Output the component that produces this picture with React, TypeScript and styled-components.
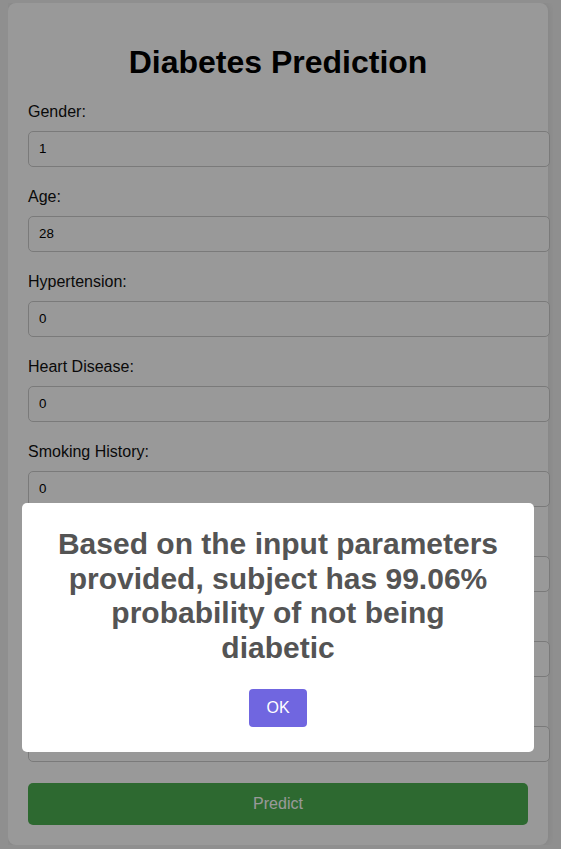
import styled, {createGlobalStyle} from "styled-components"

const fields = [
    {label: "Gender", value: "1"},
    {label: "Age", value: "28"},
    {label: "Hypertension", value: "0"},
    {label: "Heart Disease", value: "0"},
    {label: "Smoking History", value: "0"},
    {label: "BMI", value: "25.3"},
    {label: "HbA1c Level", value: "5.6"},
    {label: "Blood Glucose Level", value: "100"},
];

export default function App() {
    return (
        <>
            <GlobalStyle/>
            <Container>
                <Title>Diabetes Prediction</Title>
                <Form onSubmit={(e) => e.preventDefault()}>
                    {fields.map((field) => (
                        <Field key={field.label}>
                            <Label>{field.label}:</Label>
                            <Input type="text" defaultValue={field.value}/>
                        </Field>
                    ))}
                    <PredictButton type="submit">Predict</PredictButton>
                </Form>
            </Container>
            <Overlay>
                <Popup>
                    <PopupTitle>
                        Based on the input parameters provided, subject has 99.06% probability of not being diabetic
                    </PopupTitle>
                    <Actions>
                        <ConfirmButton>OK</ConfirmButton>
                    </Actions>
                </Popup>
            </Overlay>
        </>
    )
}

const GlobalStyle = createGlobalStyle`
    html, body {
        background: #efefef;
    }

    body {
        margin: 3px 8px 5px;
        font-family: "Liberation Sans", Arial, sans-serif;
        color: #000;
    }
`

const Container = styled.div`
    width: 500px;
    padding: 20px;

    background: #fff;
    border-radius: 8px;
    box-shadow: 0 0 10px rgba(0, 0, 0, 0.1);
`

const Title = styled.h1`
    margin: 21px 0;

    font-size: 32px;
    font-weight: bold;
    text-align: center;
`

const Form = styled.form`
    display: flex;
    flex-direction: column;
`

const Field = styled.div`
    display: flex;
    flex-direction: column;
    margin-bottom: 20px;
`

const Label = styled.label`
    margin-top: 1px;
    margin-bottom: 10px;

    font-size: 16px;
    line-height: 18px;
    color: #111;
`

const Input = styled.input`
    box-sizing: content-box;
    width: 100%;
    padding: 10px;
    margin: 0;

    font-family: "Liberation Sans", Arial, sans-serif;
    font-size: 13.33px;
    line-height: 14px;
    color: #000;

    border: 1px solid #ccc;
    border-radius: 5px;
    background: #fff;
    outline: none;
`

const PredictButton = styled.button`
    margin-top: 1px;
    padding: 12px;
    width: 100%;

    font-family: "Liberation Sans", Arial, sans-serif;
    font-size: 16px;
    line-height: 18px;
    color: #fff;

    border: none;
    border-radius: 5px;
    background: #4caf50;
    cursor: pointer;
`

const Overlay = styled.div`
    position: fixed;
    inset: 0;

    display: flex;
    justify-content: flex-start;
    align-items: flex-start;
    padding: 503px 0 0 22px;

    background: rgba(0, 0, 0, 0.4);
`

const Popup = styled.div`
    width: 512px;
    padding: 0 0 20px;

    display: flex;
    flex-direction: column;
    align-items: center;

    background: #fff;
    border-radius: 5px;
`

const PopupTitle = styled.h2`
    margin: 0;
    padding: 24px 30px 0;

    font-size: 30px;
    font-weight: 600;
    line-height: 34.5px;
    color: #545454;
    text-align: center;
`

const Actions = styled.div`
    margin-top: 21px;
    display: flex;
    justify-content: center;
`

const ConfirmButton = styled.button`
    margin: 3px 5px 5px;
    padding: 10px 17.6px;

    font-family: "Liberation Sans", Arial, sans-serif;
    font-size: 16px;
    line-height: 18px;
    color: #fff;

    border: none;
    border-radius: 4px;
    background: #7066e0;
    cursor: pointer;
`
